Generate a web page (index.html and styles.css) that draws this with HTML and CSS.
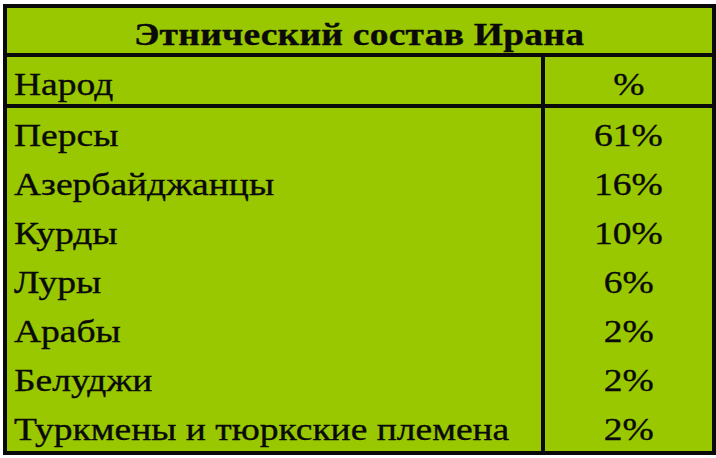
FILE: index.html
```html
<!DOCTYPE html>
<html lang="ru">
<head>
<meta charset="utf-8">
<link rel="stylesheet" href="styles.css">
</head>
<body>
<div class="eth">
  <div class="title"><span class="txt">Этнический состав Ирана</span></div>
  <div class="grid head">
    <div class="name"><span class="txt">Народ</span></div>
    <div class="pct"><span class="txt">%</span></div>
  </div>
  <div class="grid rows">
    <div class="name"><span class="txt">Персы</span></div><div class="pct"><span class="txt">61%</span></div>
    <div class="name"><span class="txt">Азербайджанцы</span></div><div class="pct"><span class="txt">16%</span></div>
    <div class="name"><span class="txt">Курды</span></div><div class="pct"><span class="txt">10%</span></div>
    <div class="name"><span class="txt">Луры</span></div><div class="pct"><span class="txt">6%</span></div>
    <div class="name"><span class="txt">Арабы</span></div><div class="pct"><span class="txt">2%</span></div>
    <div class="name"><span class="txt">Белуджи</span></div><div class="pct"><span class="txt">2%</span></div>
    <div class="name"><span class="txt">Туркмены и тюркские племена</span></div><div class="pct"><span class="txt">2%</span></div>
  </div>
</div>
</body>
</html>
```
FILE: styles.css
```css
html, body {
  margin: 0;
  padding: 0;
  background: #ffffff;
}
body {
  padding: 4px 0 0 3px;
  font-family: "Liberation Serif", "Times New Roman", serif;
  color: #0a0a0a;
  font-size: 31px;
}
.eth {
  width: 713px;
  box-sizing: border-box;
  background: #99c800;
  border: 4px solid #0a0a0a;
}
.txt {
  display: inline-block;
  transform: scaleX(1.21);
  white-space: nowrap;
  -webkit-text-stroke: 0.35px #0a0a0a;
}
.title {
  height: 49px;
  box-sizing: border-box;
  padding-top: 9px;
  line-height: 35px;
  text-align: center;
  font-weight: bold;
  border-bottom: 4px solid #0a0a0a;
}
.title .txt {
  transform-origin: 50% 50%;
  letter-spacing: 0.2px;
}
.grid {
  display: grid;
  grid-template-columns: 538px 1fr;
}
.head {
  border-bottom: 4px solid #0a0a0a;
}
.head > div {
  height: 47px;
  box-sizing: border-box;
  padding-top: 9px;
  line-height: 38px;
}
.rows > div {
  height: 49px;
  box-sizing: border-box;
  padding-top: 6px;
  line-height: 43px;
}
.name {
  padding-left: 7px;
  border-right: 4px solid #0a0a0a;
}
.name .txt {
  transform-origin: 0 50%;
}
.pct {
  text-align: center;
}
.pct .txt {
  transform-origin: 50% 50%;
}
```
